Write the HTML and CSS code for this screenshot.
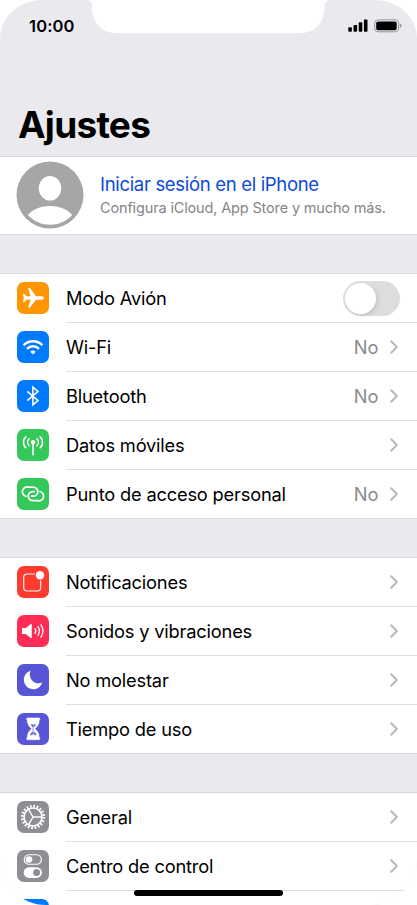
FILE: index.html
```html
<!DOCTYPE html>
<html lang="es">
<head>
<meta charset="utf-8">
<meta name="viewport" content="width=device-width, initial-scale=1">
<title>Ajustes</title>
<link rel="stylesheet" href="styles.css">
</head>
<body>
<svg width="0" height="0" class="defs" aria-hidden="true">
  <symbol id="chevron" viewBox="0 0 10 16"><path d="M2.200 2.300 7.900 8l-5.700 5.700" fill="none" stroke="#b9b9bb" stroke-width="2" stroke-linecap="round" stroke-linejoin="round"/></symbol>
</svg>
<div class="screen">
  <header class="header">
    <svg class="notch" viewBox="0 0 244 34" aria-hidden="true"><path d="M0 0Q5 0 5 6C5 22 14 33.200 30 33.200H212C229 33.200 237.500 22 237.500 7Q237.500 0 243 0Z" fill="#fff"/></svg>
    <div class="status">
      <span class="time">10:00</span>
      <svg width="54" height="14" viewBox="0 0 54 14" aria-hidden="true">
        <rect x=".3" y="8.200" width="3.600" height="4.600" rx="1"/>
        <rect x="5.500" y="6" width="3.600" height="6.800" rx="1"/>
        <rect x="10.700" y="3.200" width="3.600" height="9.600" rx="1"/>
        <rect x="15.900" y=".4" width="3.600" height="12.400" rx="1"/>
        <rect x="26.600" y=".8" width="24" height="12" rx="3.500" fill="none" stroke="#98989b"/>
        <rect x="28.200" y="2.400" width="20.500" height="8.800" rx="1.800"/>
        <path d="M51.800 4.600q1.700.5 1.700 2.200t-1.700 2.200z" fill="#98989b"/>
      </svg>
    </div>
    <h1>Ajustes</h1>
  </header>

  <section class="profile">
    <svg class="avatar" viewBox="0 0 68 68" aria-hidden="true">
      <circle cx="34" cy="34" r="33.500" fill="#a6a6a8"/>
      <ellipse cx="34" cy="27.200" rx="11.200" ry="12.300" fill="#fff"/>
      <path d="M11.800 54C22 42 46 42 56.300 54C44 67 24 67 11.800 54Z" fill="#fff"/>
    </svg>
    <div>
      <div class="signin">Iniciar sesión en el iPhone</div>
      <div class="hint">Configura iCloud, App Store y mucho más.</div>
    </div>
  </section>

  <section class="group">
    <div class="row">
      <svg class="icon orange" viewBox="0 0 32 32"><path d="M27 16q0 1.500-3 1.700h-5L13 25.600h-2l2.600-7.900H9.500L7.500 20H6l.8-4-.8-4h1.500l2 2.300h4.100L11 6h2l6 8.300h5q3 .2 3 1.700Z" fill="#fff"/></svg>
      <div class="cell"><span class="label">Modo Avión</span><span class="switch"></span></div>
    </div>
    <div class="row">
      <svg class="icon blue" viewBox="0 0 32 32"><g fill="none" stroke="#fff" stroke-width="2.400"><path d="M6.600 14.100a13.300 13.300 0 0 1 18.800 0"/><path d="M10 17.800a8.500 8.500 0 0 1 12 0"/></g><path d="M16 23.400l-2.700-2.700q2.700-2.300 5.400 0Z" fill="#fff"/></svg>
      <div class="cell"><span class="label">Wi-Fi</span><span class="value">No</span><svg class="chev"><use href="#chevron"/></svg></div>
    </div>
    <div class="row">
      <svg class="icon blue" viewBox="0 0 32 32"><path d="M10.200 11.300 21 20.600l-5.100 4.300V7.100l5.100 4.300-10.800 9.300" fill="none" stroke="#fff" stroke-width="1.600"/></svg>
      <div class="cell"><span class="label">Bluetooth</span><span class="value">No</span><svg class="chev"><use href="#chevron"/></svg></div>
    </div>
    <div class="row">
      <svg class="icon green" viewBox="0 0 32 32"><circle cx="16" cy="13.300" r="2.200" fill="#fff"/><g fill="none" stroke="#fff" stroke-width="1.600" stroke-linecap="round"><path d="M16 14v11.700"/><path d="M12.100 9.800a5 5 0 0 0 0 7M19.900 9.800a5 5 0 0 1 0 7M8.800 7.900a7.400 7.400 0 0 0 0 10.800M23.200 7.900a7.400 7.400 0 0 1 0 10.800"/></g></svg>
      <div class="cell"><span class="label">Datos móviles</span><svg class="chev"><use href="#chevron"/></svg></div>
    </div>
    <div class="row">
      <svg class="icon green" viewBox="0 0 32 32"><g fill="none" stroke="#fff" stroke-width="1.700" stroke-linecap="round"><path d="M9 18.300A4.700 4.700 0 0 1 11.200 9.100h4.600c3 0 5 2.100 5 4.600s-2 4.500-4.600 4.500h-1.700"/><path d="M23 13.500a4.700 4.700 0 0 1-2.200 9.200h-4.600c-3 0-5-2.100-5-4.600s2-4.500 4.600-4.500h1.700"/></g></svg>
      <div class="cell"><span class="label">Punto de acceso personal</span><span class="value">No</span><svg class="chev"><use href="#chevron"/></svg></div>
    </div>
  </section>

  <section class="group">
    <div class="row">
      <svg class="icon red" viewBox="0 0 32 32"><rect x="6.700" y="8" width="17" height="17" rx="3.500" fill="none" stroke="#fff" stroke-width="1.100"/><circle cx="23" cy="9.200" r="5.300" fill="#ff3b30"/><circle cx="23" cy="9.200" r="4.200" fill="#fff"/></svg>
      <div class="cell"><span class="label">Notificaciones</span><svg class="chev"><use href="#chevron"/></svg></div>
    </div>
    <div class="row">
      <svg class="icon pink" viewBox="0 0 32 32"><path d="M5 13h3.800l5-4q1-.5 1 .7v12.600q0 1.200-1 .7l-5-4H5Z" fill="#fff"/><g fill="none" stroke="#fff" stroke-width="1.300" stroke-linecap="round"><path d="M18 13.700a4 4 0 0 1 0 4.600M21 11.700a8 8 0 0 1 0 8.600M24 9.800a11.500 11.500 0 0 1 0 12.400"/></g></svg>
      <div class="cell"><span class="label">Sonidos y vibraciones</span><svg class="chev"><use href="#chevron"/></svg></div>
    </div>
    <div class="row">
      <svg class="icon indigo" viewBox="0 0 32 32"><path d="M13.500 6.800A9.400 9.400 0 1 0 25.200 18.600C18 21.500 10.500 15 13.500 6.800Z" fill="#fff"/></svg>
      <div class="cell"><span class="label">No molestar</span><svg class="chev"><use href="#chevron"/></svg></div>
    </div>
    <div class="row">
      <svg class="icon indigo" viewBox="0 0 32 32"><path d="M10 5h12.500q.8 1.500-.4 2.600-.1 5.200-4.400 8.200 4.300 3 4.400 8.200 1.200 1.100.4 2.700H10q-.8-1.600.4-2.700.1-5.200 4.400-8.200-4.300-3-4.400-8.200Q9.200 6.500 10 5Z" fill="#fff" stroke="#fff" stroke-width=".6"/><path d="M13.400 11.500h5.700l-2.200 2.800v4.400q2.500 1.700 2.800 4l-3.400-1.700-3.400 1.700q.3-2.300 2.800-4v-4.400Z" fill="#5856d6"/><path d="M16.300 12.500v8" stroke="#fff" stroke-width=".6"/></svg>
      <div class="cell"><span class="label">Tiempo de uso</span><svg class="chev"><use href="#chevron"/></svg></div>
    </div>
  </section>

  <section class="group">
    <div class="row">
      <svg class="icon gray" viewBox="0 0 32 32"><g fill="none" stroke="#fff"><circle cx="16" cy="16" r="10.800" stroke-width="2.700" stroke-dasharray="1.700 1.693"/><circle cx="16" cy="16" r="9" stroke-width="1.700"/><path d="M16 16h8.500M16 16l-4.300-7.500M16 16l-4.300 7.500" stroke-width="1.500"/></g></svg>
      <div class="cell"><span class="label">General</span><svg class="chev"><use href="#chevron"/></svg></div>
    </div>
    <div class="row">
      <svg class="icon gray" viewBox="0 0 32 32"><rect x="7.200" y="4.800" width="17.200" height="9.400" rx="4.700" fill="none" stroke="#fff" stroke-width="1.100"/><circle cx="12" cy="9.500" r="3.300" fill="#fff"/><rect x="6.700" y="17.300" width="18.200" height="10.600" rx="5.300" fill="#fff"/><circle cx="19.600" cy="22.600" r="3.500" fill="#8e8e93"/></svg>
      <div class="cell"><span class="label">Centro de control</span><svg class="chev"><use href="#chevron"/></svg></div>
    </div>
    <div class="row">
      <svg class="icon blue" viewBox="0 0 32 32"></svg>
      <div class="cell"></div>
    </div>
  </section>
  <div class="home"></div>
</div>
</body>
</html>
```
FILE: styles.css
```css
* { box-sizing: border-box; }
body { margin: 0; background: #fff; font-family: Inter, "Liberation Sans", sans-serif; color: #000; }
.defs { position: absolute; }
.screen { position: relative; width: 417px; height: 905px; overflow: hidden; background: #eae9ee; border-radius: 42px 42px 46px 46px / 38px 38px 46px 46px; }
.header { position: relative; height: 156px; padding: 0 17px 0 18px; }
.notch { position: absolute; left: 87px; top: 0; width: 244px; height: 34px; }
.status { display: flex; justify-content: space-between; align-items: center; height: 52px; }
.status svg { margin-right: -2px; }
.time { font-size: 16.5px; font-weight: 600; margin-left: 11px; line-height: 20px; letter-spacing: .15px; }
h1 { margin: 50px 0 0; font-size: 37px; line-height: 46px; font-weight: 700; letter-spacing: -.75px; }
.profile { display: flex; align-items: center; gap: 16px; height: 79px; padding: 0 0 2px 16px; background: #fff; border-top: 1px solid #d8d8db; border-bottom: 1px solid #d8d8db; }
.avatar { width: 68px; height: 68px; }
.signin { font-size: 18.5px; line-height: 24px; color: #0b49e0; letter-spacing: -.32px; }
.hint { font-size: 14.5px; line-height: 20px; color: #858587; margin: 2px 0 -1px; letter-spacing: -.15px; }
.group { margin-top: 38px; background: #fff; border-top: 1px solid #d8d8db; }
.row { display: flex; align-items: center; height: 49px; padding-left: 17px; gap: 17px; }
.icon { width: 32px; height: 32px; border-radius: 7px; flex: none; margin-bottom: 1px; }
.cell { flex: 1; display: flex; align-items: center; height: 49px; padding-right: 17px; border-bottom: 1px solid #dfdfe1; }
.row:last-child .cell { border-color: transparent; }
.group .row:last-child { border-bottom: 1px solid #d8d8db; }
.row:last-child .icon { margin-bottom: 0; }
.label { flex: 1; font-size: 18.3px; line-height: 24px; letter-spacing: -.2px; white-space: nowrap; }
.value { font-size: 18.3px; line-height: 24px; color: #8a8a8e; margin-right: 10.5px; }
.chev { width: 10px; height: 16px; margin-right: 1px; }
.switch { width: 57px; height: 35px; border-radius: 18px; background: #dddddf; padding: 2px; }
.switch::before { content: ""; display: block; width: 31px; height: 31px; border-radius: 50%; background: #fff; box-shadow: 2px 2px 4px rgba(0,0,0,.1); }
.orange { background: #ff9500; }
.blue { background: #007aff; }
.green { background: #34c759; }
.red { background: #ff3b30; }
.pink { background: #ff2d55; }
.indigo { background: #5856d6; }
.gray { background: #8e8e93; }
.home { position: absolute; left: 134px; top: 890px; width: 149px; height: 6px; border-radius: 3px; background: #000; }
```
